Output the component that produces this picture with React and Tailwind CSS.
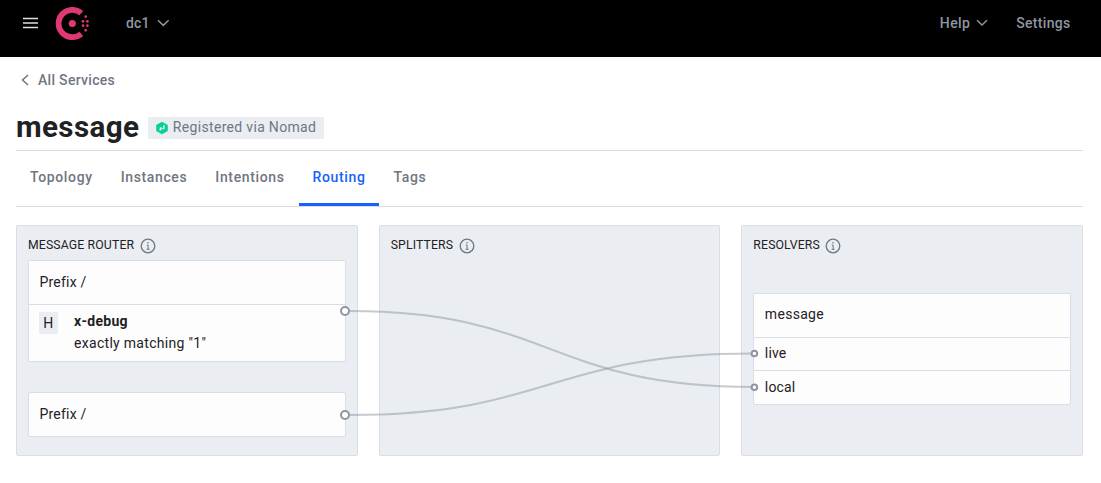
import React from "react";

function Chevron({ className, d = "M1 1.2 6.3 6.4 11.6 1.2" }) {
  return (
    <svg className={className} viewBox="0 0 12.6 7.6" fill="none" stroke="currentColor" strokeWidth="1.5">
      <path d={d} />
    </svg>
  );
}

function ConsulLogo() {
  return (
    <svg className="ml-[17px] h-[36px] w-[36px]" viewBox="0 0 36 36" fill="#e03875">
      <path d="M26.3 8.2A13.7 13.7 0 1 0 26.3 28.8" fill="none" stroke="#e03875" strokeWidth="5.7" />
      <circle cx="17.3" cy="18.5" r="3.6" />
      <circle cx="30.7" cy="11.6" r="1.35" />
      <circle cx="28" cy="16.3" r="1.35" />
      <circle cx="32.4" cy="16.3" r="1.35" />
      <circle cx="28" cy="20.7" r="1.35" />
      <circle cx="32.4" cy="20.7" r="1.35" />
      <circle cx="30.7" cy="25.3" r="1.35" />
    </svg>
  );
}

function NomadIcon() {
  return (
    <svg className="mr-[3.5px] h-[14px] w-[14px]" viewBox="0 0 14 14">
      <path d="M7 .7 12.8 3.9v6.2L7 13.3 1.2 10.1V3.9z" fill="#06d092" />
      <path d="M4.6 10V6.7L6.3 5.8V7.2L8 7.6V4.7L9.6 3.9V7.4L8 8.6 6.2 8.1V9.2z" fill="#eaedf2" />
    </svg>
  );
}

function InfoIcon() {
  return (
    <svg className="mt-px ml-[5.5px] h-4 w-4" viewBox="0 0 16 16" fill="none" stroke="#6f7682">
      <circle cx="8" cy="8" r="6.8" strokeWidth="1.3" />
      <path d="M6.8 7H8.1V11.3M6.6 11.3H9.6" strokeWidth="1" />
      <circle cx="8" cy="4.8" r=".8" fill="#6f7682" stroke="none" />
    </svg>
  );
}

function Tab({ children, active }) {
  return (
    <div
      className={
        active
          ? "h-[55px] border-b-[3px] border-[#1563ff] px-[14px] pt-4 text-[#1563ff]"
          : "h-[55px] px-[14px] pt-4"
      }
    >
      {children}
    </div>
  );
}

function Panel({ title, children }) {
  return (
    <section className="flex h-[231px] flex-1 flex-col rounded-[2px] border border-[#dbdde4] bg-[#eaedf2] px-[11px]">
      <h2 className="flex h-[34px] shrink-0 items-center pt-1 text-[12.25px] leading-[18px] tracking-[0.14px] whitespace-nowrap">
        {title}
        <InfoIcon />
      </h2>
      {children}
    </section>
  );
}

function Connections() {
  return (
    <svg className="pointer-events-none absolute top-0 left-0 h-[231px] w-[1067px]" viewBox="16 225 1067 231" fill="none">
      <g stroke="#8e96a3" strokeOpacity=".5" strokeWidth="2">
        <path d="M350 311C549.5 311 549.5 387 754 387" />
        <path d="M350 415C549.5 415 549.5 353.5 754 353.5" />
      </g>
      <g fill="#fff" stroke="#8e96a3" strokeWidth="2">
        <circle cx="345" cy="311" r="4" />
        <circle cx="345" cy="415" r="4" />
        <circle cx="754.4" cy="353.5" r="2.8" />
        <circle cx="754.4" cy="387.2" r="2.8" />
      </g>
    </svg>
  );
}

const card = "shrink-0 rounded-[2px] border border-[#dbdde4] bg-[#fdfdfd]";

export default function App() {
  return (
    <div className="h-[483px] bg-white font-['Roboto',sans-serif] text-[14px] leading-[21px] tracking-[0.3px] text-[#1f2124]">
      <header className="flex h-[57px] items-start bg-black pr-[30.5px] pl-[23px] font-medium text-[#8e96a3]">
        <div className="flex h-[46px] items-center">
          <svg className="h-[12px] w-[15px]" viewBox="0 0 15 12" stroke="#dce0e6" strokeWidth="1.5">
            <path d="M0 1.5H15M0 6H15M0 10.5H15" />
          </svg>
          <ConsulLogo />
          <span className="ml-[35px] tracking-[0.1px]">dc1</span>
          <Chevron className="ml-[7.8px] h-[7.6px] w-[12.6px]" />
        </div>
        <div className="ml-auto flex h-[46px] items-center">
          <span className="tracking-[0.4px]">Help</span>
          <Chevron className="ml-[5.5px] h-[7.2px] w-[12px]" />
          <span className="ml-[28.5px]">Settings</span>
        </div>
      </header>

      <main className="pr-[18px] pl-4">
        <nav className="flex h-[46px] items-center pl-[5px] font-medium text-[#6f7682]">
          <svg className="mr-[9px] h-[12px] w-[8px]" viewBox="0 0 8 12" fill="none" stroke="currentColor" strokeWidth="1.5">
            <path d="M7 1 1.5 6 7 11" />
          </svg>
          All Services
        </nav>

        <div className="flex h-[48px] items-center border-b border-[#dbdbe5]">
          <h1 className="text-[29.6px] leading-[36px] font-bold tracking-[0.37px]">message</h1>
          <span className="mt-[2px] ml-[9px] flex h-[22px] items-center rounded-[2px] bg-[#eaedf2] pr-[7.8px] pl-[7px] text-[#6f7682]">
            <NomadIcon />
            <span className="tracking-[0.32px]">Registered via Nomad</span>
          </span>
        </div>

        <div className="flex h-[56px] border-b border-[#dbdbe5] font-medium tracking-[0.63px] text-[#6f7682]">
          <Tab>Topology</Tab>
          <Tab>Instances</Tab>
          <Tab>Intentions</Tab>
          <Tab active>Routing</Tab>
          <Tab>Tags</Tab>
        </div>

        <div className="relative mt-[18px] flex gap-[21px]">
          <Panel title="MESSAGE ROUTER">
            <div className={card}>
              <div className="h-[43px] px-[10.5px] pt-[11px] tracking-[0.2px]">Prefix /</div>
              <div className="flex h-[57px] border-t border-[#dbdde4] pt-[6px] pl-[10px]">
                <span className="mt-px flex h-[22px] w-[19px] items-center justify-center bg-[#eaedf2]">H</span>
                <div className="ml-4">
                  <div className="font-bold">x-debug</div>
                  <div className="mt-px">exactly matching "1"</div>
                </div>
              </div>
            </div>
            <div className={card + " mt-[30px] h-[45px] px-[10.5px] pt-[11px] tracking-[0.2px]"}>Prefix /</div>
          </Panel>
          <Panel title="SPLITTERS" />
          <Panel title="RESOLVERS">
            <div className={card + " mt-[33px]"}>
              <div className="h-[43px] px-[10.5px] pt-[10px]">message</div>
              <div className="h-[33px] border-t border-[#dbdde4] px-[10.5px] pt-[5px] tracking-[0.15px]">live</div>
              <div className="h-[34px] border-t border-[#dbdde4] px-[10.5px] pt-[6px] tracking-[0.15px]">local</div>
            </div>
          </Panel>
          <Connections />
        </div>
      </main>
    </div>
  );
}
